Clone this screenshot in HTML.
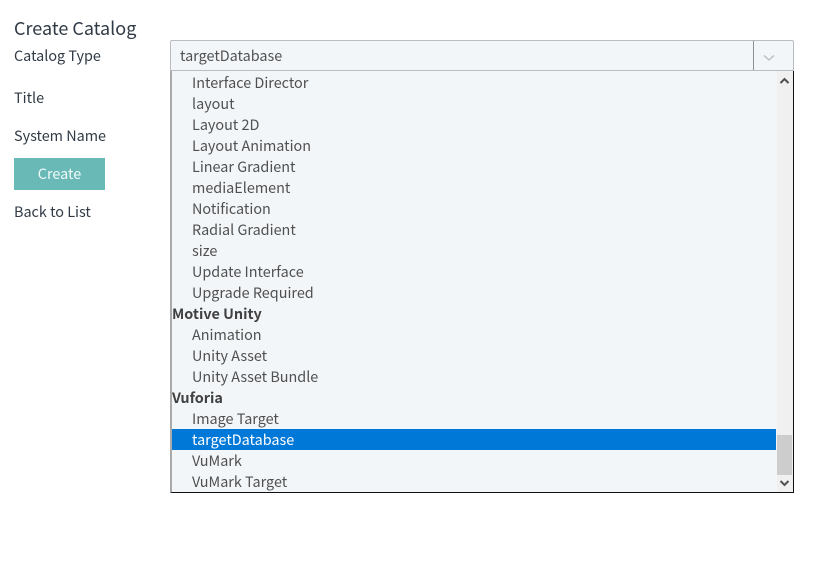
<!DOCTYPE html>
<html><head><meta charset="utf-8"><style>
html,body{margin:0;padding:0;background:#fff;width:828px;height:570px;overflow:hidden}
body{position:relative;font-family:"Noto Sans CJK JP","Liberation Sans",sans-serif;font-size:14.4px;color:#2f3a45}
.a{position:absolute;white-space:nowrap;line-height:21px}
.o{position:absolute;left:2px;width:604px;height:21px;line-height:21px;padding-left:20px;box-sizing:border-box;white-space:nowrap;color:#505050}
.g{padding-left:0;font-weight:700;color:#404040}
.s{background:#0078d7;color:#fff}
</style></head><body>
<div class="a" style="left:14px;top:17px;font-size:18px;line-height:22px">Create Catalog</div>
<div class="a" style="left:14px;top:45px">Catalog Type</div>
<div class="a" style="left:14px;top:87px">Title</div>
<div class="a" style="left:14px;top:125px">System Name</div>
<div class="a" style="left:14px;top:158px;width:91px;height:32px;line-height:31px;background:#69b9b6;color:#f2fbfa;text-align:center">Create</div>
<div class="a" style="left:14px;top:201px">Back to List</div>

<div style="position:absolute;left:170px;top:40px;width:624px;height:31px;box-sizing:border-box;background:#f3f6f9;border:1px solid #b9bdc2;border-radius:2px 2px 0 0"></div>
<div class="a" style="left:180px;top:45px;color:#505050">targetDatabase</div>
<div style="position:absolute;left:753px;top:41px;width:1px;height:29px;background:#8d9094"></div>
<svg style="position:absolute;left:763px;top:54px" width="12" height="8"><path d="M1 1.5 L6 6 L11 1.5" fill="none" stroke="#b5b8bc" stroke-width="1.2"/></svg>

<div style="position:absolute;left:170px;top:71px;width:624px;height:422px;box-sizing:border-box;background:#f3f6f9;border-right:1px solid #111;border-bottom:1px solid #111;border-left:2px solid #aaa;overflow:hidden"></div>
<div style="position:absolute;left:170px;top:71px;width:624px;height:421px;overflow:hidden">
<div class="o" style="top:1px">Interface Director</div>
<div class="o" style="top:22px">layout</div>
<div class="o" style="top:43px">Layout 2D</div>
<div class="o" style="top:64px">Layout Animation</div>
<div class="o" style="top:85px">Linear Gradient</div>
<div class="o" style="top:106px">mediaElement</div>
<div class="o" style="top:127px">Notification</div>
<div class="o" style="top:148px">Radial Gradient</div>
<div class="o" style="top:169px">size</div>
<div class="o" style="top:190px">Update Interface</div>
<div class="o" style="top:211px">Upgrade Required</div>
<div class="o g" style="top:232px">Motive Unity</div>
<div class="o" style="top:253px">Animation</div>
<div class="o" style="top:274px">Unity Asset</div>
<div class="o" style="top:295px">Unity Asset Bundle</div>
<div class="o g" style="top:316px">Vuforia</div>
<div class="o" style="top:337px">Image Target</div>
<div class="o s" style="top:358px">targetDatabase</div>
<div class="o" style="top:379px">VuMark</div>
<div class="o" style="top:400px">VuMark Target</div>
</div>

<div style="position:absolute;left:777px;top:71px;width:16px;height:421px;background:#f0f0f0"></div>
<div style="position:absolute;left:777px;top:435px;width:15px;height:40px;background:#cdcdcd"></div>
<svg style="position:absolute;left:779px;top:76px" width="11" height="9"><path d="M1.5 7 L5.5 3 L9.5 7" fill="none" stroke="#505050" stroke-width="2"/></svg>
<svg style="position:absolute;left:779px;top:479px" width="11" height="9"><path d="M1.5 2 L5.5 6 L9.5 2" fill="none" stroke="#505050" stroke-width="2"/></svg>
</body></html>
